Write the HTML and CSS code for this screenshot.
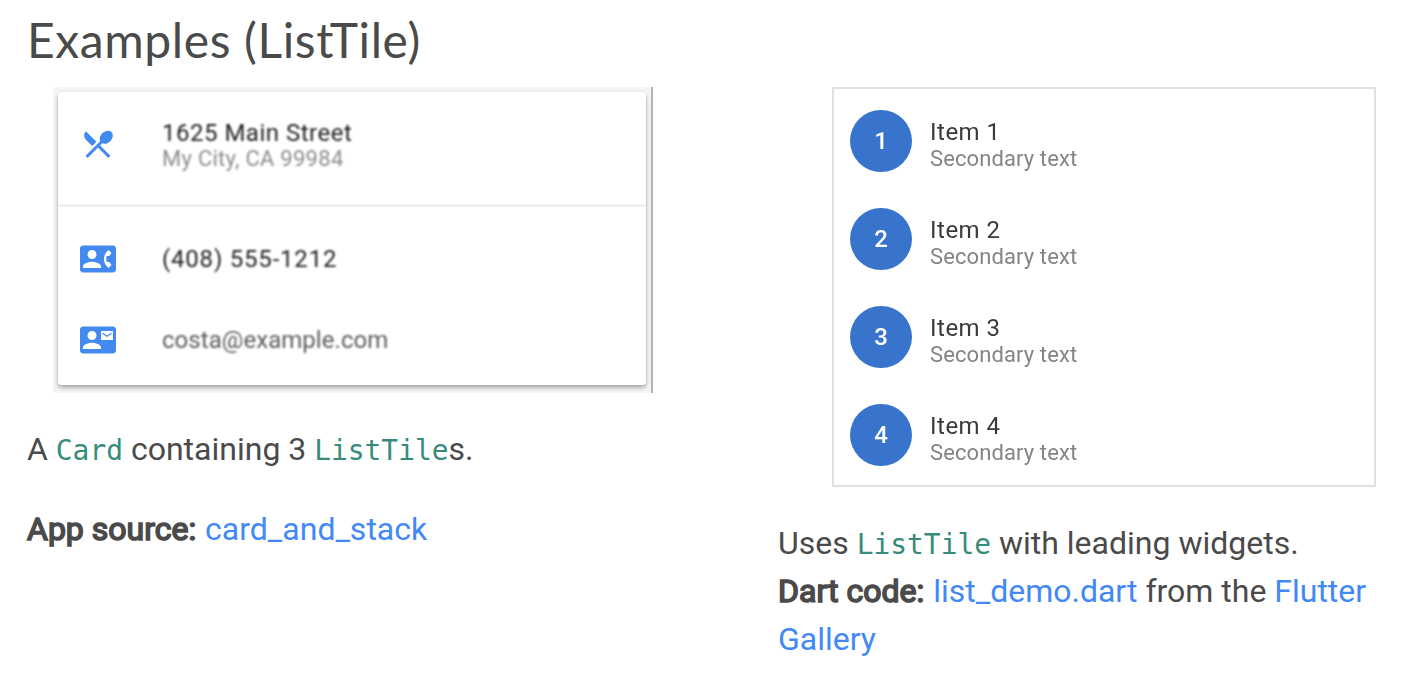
FILE: index.html
```html
<!DOCTYPE html>
<html lang="en">
<head>
<meta charset="utf-8">
<title>Examples (ListTile)</title>
<link rel="stylesheet" href="styles.css">
</head>
<body>
<main class="page">
  <h3 class="heading">Examples (ListTile)</h3>
  <div class="columns">
    <section class="column column-left">
      <div class="shot shot-card">
        <div class="card">
          <div class="tile tile-address">
            <svg class="tile-icon" viewBox="0 0 24 24"><path d="M8.1 13.34l2.83-2.83L3.91 3.5a4.008 4.008 0 0 0 0 5.66l4.19 4.18zm6.78-1.81c1.53.71 3.68.21 5.27-1.38 1.91-1.91 2.28-4.65.81-6.12-1.46-1.46-4.2-1.1-6.12.81-1.59 1.59-2.09 3.74-1.38 5.27L3.7 19.87l1.41 1.41L12 14.41l6.88 6.88 1.41-1.41L13.41 13l1.47-1.47z"/></svg>
            <div class="tile-body">
              <div class="tile-title tile-strong t-street">1625 Main Street</div>
              <div class="tile-sub">My City, CA 99984</div>
            </div>
          </div>
          <div class="tile tile-phone">
            <svg class="tile-icon" viewBox="0 0 24 24"><path d="M22 3H2C.9 3 0 3.900 0 5v14c0 1.100.9 2 2 2h20c1.100 0 1.990-.9 1.990-2L24 5c0-1.100-.9-2-2-2zM8 6c1.660 0 3 1.340 3 3s-1.340 3-3 3-3-1.340-3-3 1.340-3 3-3zm6 12H2v-1c0-2 4-3.100 6-3.100s6 1.100 6 3.100v1zm3.850-4h1.640L21 16l-1.990 1.990c-1.310-.98-2.280-2.380-2.730-3.990-.18-.64-.28-1.310-.28-2s.1-1.360.28-2c.45-1.620 1.420-3.010 2.730-3.990L21 8l-1.510 2h-1.640c-.22.63-.35 1.300-.35 2s.13 1.370.35 2z"/></svg>
            <div class="tile-title tile-strong t-phone">(408) 555-1212</div>
          </div>
          <div class="tile tile-mail">
            <svg class="tile-icon" viewBox="0 0 24 24"><path d="M22 3H2C.9 3 0 3.900 0 5v14c0 1.100.9 2 2 2h20c1.100 0 1.990-.9 1.990-2L24 5c0-1.100-.9-2-2-2zM8 6c1.660 0 3 1.340 3 3s-1.340 3-3 3-3-1.340-3-3 1.340-3 3-3zm6 12H2v-1c0-2 4-3.100 6-3.100s6 1.100 6 3.100v1zm8-6h-8V6h8v6zm-1-5l-3 2-3-2v1l3 2 3-2z"/></svg>
            <div class="tile-title t-mail">costa@example.com</div>
          </div>
        </div>
      </div>
      <p class="text">A <code>Card</code> containing 3 <code>ListTile</code>s.</p>
      <p class="text"><b>App source:</b> <a>card_and_stack</a></p>
    </section>
    <section class="column column-right">
      <div class="shot shot-list">
        <div class="item"><span class="avatar">1</span><div><div class="item-title">Item 1</div><div class="item-sub">Secondary text</div></div></div>
        <div class="item"><span class="avatar">2</span><div><div class="item-title">Item 2</div><div class="item-sub">Secondary text</div></div></div>
        <div class="item"><span class="avatar">3</span><div><div class="item-title">Item 3</div><div class="item-sub">Secondary text</div></div></div>
        <div class="item"><span class="avatar">4</span><div><div class="item-title">Item 4</div><div class="item-sub">Secondary text</div></div></div>
      </div>
      <p class="text">Uses <code>ListTile</code> with leading widgets.</p>
      <p class="text text-next"><b>Dart code:</b> <a>list_demo.dart</a> from the <a>Flutter Gallery</a></p>
    </section>
  </div>
</main>
</body>
</html>
```
FILE: styles.css
```css
* { box-sizing: border-box; }
body {
  margin: 0;
  background: #fff;
  color: #4a4a4a;
  font-family: Roboto, sans-serif;
}
.page {
  height: 698px;
  padding: 10px 27px 0;
  overflow: hidden;
}
.heading {
  margin: 0;
  height: 77px;
  font: 400 48px/59px Lato, sans-serif;
  letter-spacing: .6px;
}
.columns { display: flex; }
.column-left { width: 751px; }
.column-right { width: 610px; }

.text {
  margin: 32px 0 0;
  font-size: 32px;
  line-height: 48px;
}
.text-next { margin-top: 0; }
.text code {
  font: 27.9px/1 "DejaVu Sans Mono", monospace;
  color: #378b7b;
}
.text b {
  padding-right: 1px;
  font-weight: 400;
  -webkit-text-stroke: 1.6px #4a4a4a;
}
.text a { color: #4289f5; }

/* Address card */
.shot-card {
  width: 600px;
  height: 306px;
  margin-left: 26px;
  padding: 5px 5px 8px 5px;
  background: #f5f5f5;
  border-right: 2px solid #b4b4b4;
}
.card {
  height: 293px;
  width: 588px;
  background: #fff;
  border-radius: 3px;
  box-shadow: 0 3px 4px rgba(0, 0, 0, .28), 0 0 3px rgba(0, 0, 0, .1);
}
.tile {
  display: flex;
  align-items: center;
  padding-left: 22px;
}
.tile-icon {
  flex: none;
  width: 36px;
  height: 36px;
  margin-right: 46px;
  fill: #4289f0;
  filter: blur(.7px);
}
.tile-address {
  height: 115px;
  padding-bottom: 9px;
  border-bottom: 3px solid #f0f0f0;
}
.tile-body { padding-top: 5px; }
.tile-phone { height: 104px; }
.tile-mail { height: 58px; }
.tile-title, .tile-sub {
  font-size: 24px;
  line-height: 26px;
  color: #5c5c5c;
  filter: blur(.8px);
}
.tile-title.tile-strong { color: #222; }
.tile-sub {
  font-size: 22px;
  color: #8c8c8c;
  letter-spacing: .27px;
}
.t-street { letter-spacing: .5px; }
.t-phone { letter-spacing: .8px; }
.t-mail { letter-spacing: .05px; }

/* Numbered list */
.shot-list {
  width: 544px;
  height: 400px;
  margin-left: 54px;
  padding: 3px 0 0 16px;
  border: 2px solid #dee2e6;
}
.item {
  display: flex;
  align-items: center;
  gap: 18px;
  height: 98px;
}
.avatar {
  width: 62px;
  height: 62px;
  border-radius: 50%;
  background: #3874cb;
  color: #fff;
  font: 500 24px/62px Roboto, sans-serif;
  text-align: center;
  filter: blur(.6px);
}
.item-title {
  font-size: 24px;
  line-height: 28px;
  margin-top: 8px;
  letter-spacing: .5px;
  color: #3a3a3a;
  filter: blur(.7px);
}
.item-sub {
  font-size: 22px;
  line-height: 26px;
  letter-spacing: .1px;
  color: #848484;
  filter: blur(.7px);
}
```
